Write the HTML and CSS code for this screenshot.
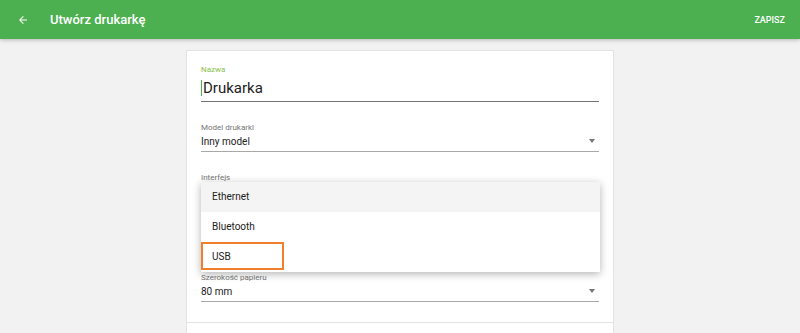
FILE: index.html
```html
<!DOCTYPE html>
<html lang="pl">
<head>
    <meta charset="UTF-8">
    <meta name="viewport" content="width=device-width, initial-scale=1.0">
    <title>Utwórz drukarkę</title>
    <link rel="stylesheet" href="styles.css">
</head>
<body>
    <header class="toolbar">
        <span class="back">
            <svg width="12" height="12" viewBox="0 0 24 24"><path d="M20 11H7.83l5.59-5.59L12 4l-8 8 8 8 1.41-1.41L7.83 13H20v-2z" fill="#fff"/></svg>
        </span>
        <h1 class="title">Utwórz drukarkę</h1>
        <button class="save" type="button">ZAPISZ</button>
    </header>

    <main class="card">
        <div class="card-body">
            <div class="field focused">
                <label>Nazwa</label>
                <div class="value big"><span class="caret"></span>Drukarka</div>
            </div>
            <div class="field select">
                <label>Model drukarki</label>
                <div class="value">Inny model</div>
            </div>
            <div class="field select menu-anchor">
                <label>Interfejs</label>
                <div class="value"></div>
                <ul class="menu">
                    <li class="active">Ethernet</li>
                    <li>Bluetooth</li>
                    <li class="marked">USB</li>
                </ul>
            </div>
            <!-- covered by the open menu -->
            <div class="field select">
                <label></label>
                <div class="value"></div>
            </div>
            <div class="field select">
                <label>Szerokość papieru</label>
                <div class="value">80 mm</div>
            </div>
        </div>
        <div class="card-foot"></div>
    </main>
</body>
</html>
```

FILE: styles.css
```css
body {
    margin: 0;
    background: #f2f2f2;
    font-family: Roboto, "Liberation Sans", sans-serif;
    color: #212121;
}
.toolbar {
    height: 39px;
    background: #4caf50;
    display: flex;
    align-items: center;
    padding: 0 15px 0 17px;
    box-shadow: 0 1px 4px rgba(0, 0, 0, 0.25);
    color: #fff;
}
.back {
    display: flex;
    width: 12px;
    height: 12px;
    margin-right: 21px;
}
.title {
    flex: 1;
    margin: 0;
    font-size: 13px;
    font-weight: 500;
}
.save {
    background: none;
    border: none;
    color: #fff;
    font-family: inherit;
    font-size: 9px;
    font-weight: 500;
    padding: 0;
}
.card {
    width: 426px;
    margin: 11px auto 0;
    background: #fff;
    border: 1px solid #e3e3e3;
    border-bottom: none;
}
.card-body {
    padding: 13px 14px 0;
}
.card-foot {
    border-top: 1px solid #e3e3e3;
    height: 20px;
}
.field {
    margin-bottom: 20px;
    border-bottom: 1px solid #a8a8a8;
    position: relative;
}
.field label {
    display: block;
    min-height: 11px;
    font-size: 8px;
    line-height: 11px;
    color: #757575;
}
.field .value {
    min-height: 18px;
    font-size: 10px;
    line-height: 18px;
}
.field .value.big {
    font-size: 15px;
    line-height: 26px;
}
.focused label {
    color: #8bc34a;
}
.focused {
    border-bottom-color: #757575;
}
.caret {
    display: inline-block;
    width: 1px;
    height: 16px;
    margin-right: 1px;
    background: #4caf50;
    vertical-align: -3px;
}
.select::after {
    content: "";
    position: absolute;
    right: 4px;
    bottom: 8px;
    border-left: 3.5px solid transparent;
    border-right: 3.5px solid transparent;
    border-top: 4px solid #757575;
}
.menu {
    position: absolute;
    top: 10px;
    left: 0;
    width: 399px;
    margin: 0;
    padding: 0;
    list-style: none;
    background: #fff;
    box-shadow: 0 2px 8px rgba(0, 0, 0, 0.3);
    z-index: 2;
}
.menu li {
    position: relative;
    height: 30px;
    line-height: 30px;
    padding-left: 11px;
    font-size: 10px;
    color: #212121;
}
.menu li.active {
    background: #f4f4f4;
}
.menu li.marked::after {
    content: "";
    position: absolute;
    left: 0;
    top: 0;
    width: 79px;
    height: 24px;
    border: 2px solid #f07f2c;
}
```
